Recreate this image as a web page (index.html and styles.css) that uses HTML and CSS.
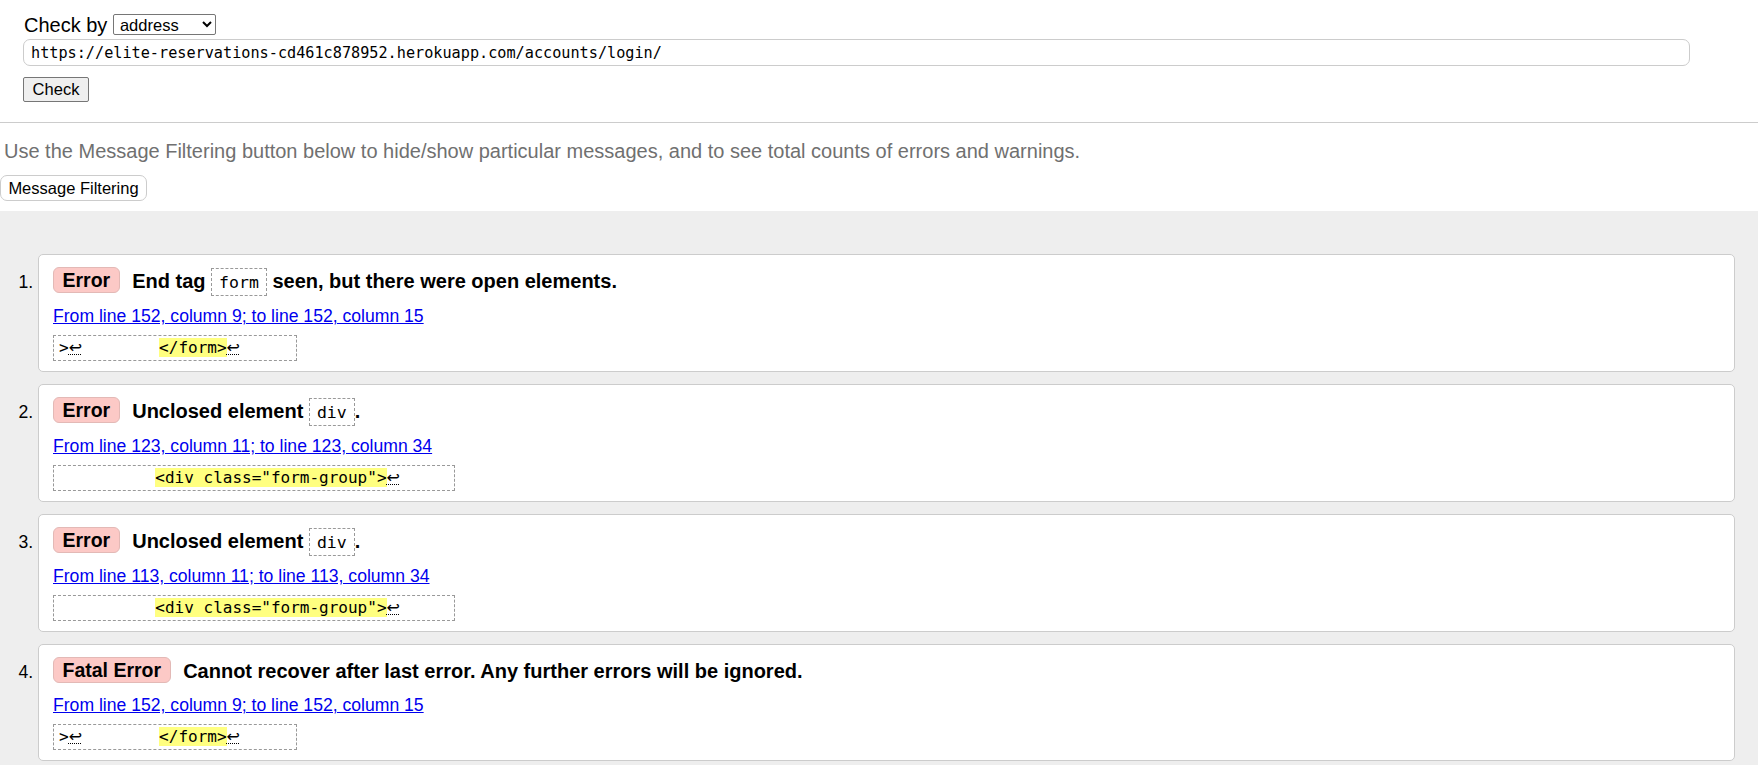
FILE: index.html
```html
<!DOCTYPE html>
<html>
<head>
<meta charset="utf-8">
<title>Validator</title>
<link rel="stylesheet" href="styles.css">
</head>
<body>
<header class="top">
  <form class="check-form">
    <div class="checkby">Check by <select class="sel"><option>address</option></select></div>
    <input class="url" type="text" value="https://elite-reservations-cd461c878952.herokuapp.com/accounts/login/">
    <div class="btnrow"><button type="button" class="checkbtn">Check</button></div>
  </form>
  <hr class="rule">
  <p class="hint">Use the Message Filtering button below to hide/show particular messages, and to see total counts of errors and warnings.</p>
  <button type="button" class="filterbtn">Message Filtering</button>
</header>
<main class="results">
  <ol class="msgs">
    <li class="card">
      <p class="msg"><span class="badge">Error</span>End tag <code class="tok">form</code> seen, but there were open elements.</p>
      <p class="loc"><a href="#">From line 152, column 9; to line 152, column 15</a></p>
      <code class="extract short">&gt;<abbr class="lf">↩</abbr>        <b class="hl">&lt;/form&gt;</b><abbr class="lf">↩</abbr></code>
    </li>
    <li class="card">
      <p class="msg"><span class="badge">Error</span>Unclosed element <code class="tok">div</code>.</p>
      <p class="loc"><a href="#">From line 123, column 11; to line 123, column 34</a></p>
      <code class="extract">          <b class="hl">&lt;div class="form-group"&gt;</b><abbr class="lf">↩</abbr></code>
    </li>
    <li class="card">
      <p class="msg"><span class="badge">Error</span>Unclosed element <code class="tok">div</code>.</p>
      <p class="loc"><a href="#">From line 113, column 11; to line 113, column 34</a></p>
      <code class="extract">          <b class="hl">&lt;div class="form-group"&gt;</b><abbr class="lf">↩</abbr></code>
    </li>
    <li class="card">
      <p class="msg"><span class="badge">Fatal Error</span>Cannot recover after last error. Any further errors will be ignored.</p>
      <p class="loc"><a href="#">From line 152, column 9; to line 152, column 15</a></p>
      <code class="extract short">&gt;<abbr class="lf">↩</abbr>        <b class="hl">&lt;/form&gt;</b><abbr class="lf">↩</abbr></code>
    </li>
  </ol>
</main>
</body>
</html>
```
FILE: styles.css
```css
html, body {
  margin: 0;
  padding: 0;
}
body {
  font-family: "Liberation Sans", Arial, sans-serif;
  color: #000;
  background: #fff;
  min-height: 100vh;
  display: flex;
  flex-direction: column;
}
.top {
  background: #fff;
  padding-bottom: 10px;
}
.check-form {
  margin: 0;
  padding: 13px 0 0 23px;
}
.checkby {
  font-size: 20px;
  line-height: 25px;
  padding-left: 1px;
}
.sel {
  box-sizing: border-box;
  font-family: "Liberation Sans", Arial, sans-serif;
  font-size: 16.5px;
  width: 103px;
  height: 21px;
  padding: 0 2px;
  border: 1px solid #767676;
  border-radius: 2px;
  background: #fff;
  color: #000;
  vertical-align: 1px;
}
.url {
  display: block;
  box-sizing: border-box;
  width: 1667px;
  height: 27px;
  margin: 1px 0 0;
  padding: 0 7px;
  border: 1px solid #cccccc;
  border-radius: 7px;
  font-family: "DejaVu Sans Mono", "Liberation Mono", monospace;
  font-size: 15.2px;
  color: #000;
  background: #fff;
}
.btnrow {
  padding: 11px 0 20px;
  line-height: 0;
}
.checkbtn {
  box-sizing: border-box;
  width: 66px;
  height: 25px;
  padding: 0;
  font-family: "Liberation Sans", Arial, sans-serif;
  font-size: 16.5px;
  background: #efefef;
  border: 1px solid #767676;
  border-radius: 2px;
  color: #000;
}
.rule {
  margin: 0;
  border: none;
  height: 1px;
  background: #cccccc;
}
.hint {
  margin: 0;
  padding: 17px 0 0 4px;
  font-size: 20px;
  line-height: 23px;
  color: #707070;
}
.filterbtn {
  display: block;
  box-sizing: border-box;
  margin: 12px 0 0;
  width: 147px;
  height: 26px;
  padding: 0;
  font-family: "Liberation Sans", Arial, sans-serif;
  font-size: 16.5px;
  background: #fff;
  border: 1px solid #cccccc;
  border-radius: 7px;
  color: #000;
}
.results {
  flex: 1;
  background: #eeeeee;
  padding: 43px 0 1px;
}
.msgs {
  margin: 0 23px 0 0;
  padding: 0 0 0 38px;
  font-size: 17.6px;
}
.card {
  background: #fff;
  border: 1px solid #cccccc;
  border-radius: 5px;
  padding: 12px 14px 10px;
  margin-bottom: 12px;
}
.card::marker {
  font-size: 17.6px;
  font-weight: normal;
}
.msg {
  margin: 0;
  font-size: 20px;
  font-weight: bold;
  line-height: 29px;
}
.badge {
  display: inline-block;
  box-sizing: border-box;
  height: 26px;
  line-height: 24px;
  padding: 0 8.5px;
  margin-right: 12.5px;
  font-size: 19.5px;
  background: #fcc9c6;
  border: 1px solid #e3b9b6;
  border-radius: 6px;
  vertical-align: 1px;
}
.tok {
  font-family: "DejaVu Sans Mono", "Liberation Mono", monospace;
  font-size: 16.5px;
  font-weight: normal;
  border: 1px dashed #999;
  padding: 4px 7px 3px;
}
.loc {
  margin: 8px 0 0;
  line-height: 22px;
  font-size: 17.6px;
}
.loc a {
  color: #0000ee;
}
.extract {
  display: block;
  width: fit-content;
  box-sizing: border-box;
  margin-top: 8px;
  height: 26px;
  line-height: 24px;
  padding: 0 54px 0 5px;
  border: 1px dashed #999;
  font-family: "DejaVu Sans Mono", "Liberation Mono", monospace;
  font-size: 16px;
  white-space: pre;
}
.extract.short {
  padding-right: 56px;
}
.hl {
  font-weight: normal;
  background: #ffff80;
}
.lf {
  font-family: "DejaVu Sans", sans-serif;
  text-decoration: underline dotted;
  text-decoration-thickness: 1px;
}
```
